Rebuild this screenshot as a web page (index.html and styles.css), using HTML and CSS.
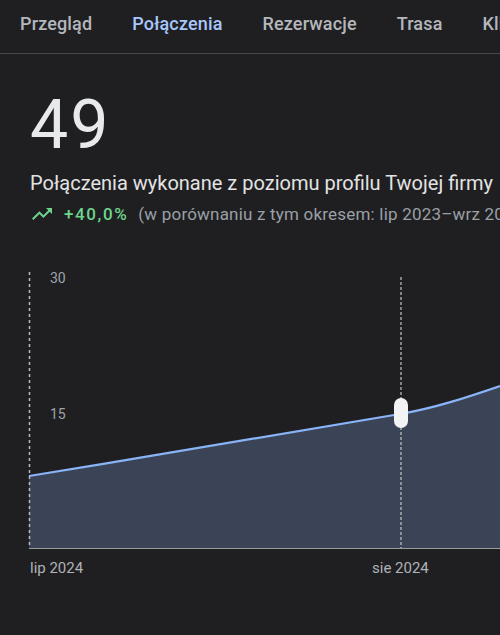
FILE: index.html
```html
<!DOCTYPE html>
<html lang="pl">
<head>
<meta charset="utf-8">
<link rel="stylesheet" href="styles.css">
</head>
<body>
<nav class="tabs">
  <span class="tab">Przegląd</span>
  <span class="tab active">Połączenia</span>
  <span class="tab">Rezerwacje</span>
  <span class="tab">Trasa</span>
  <span class="tab">Kliknięcia</span>
</nav>
<main class="summary">
  <div class="big">49</div>
  <div class="title">Połączenia wykonane z poziomu profilu Twojej firmy</div>
  <div class="trend">
    <svg class="trend-icon" viewBox="0 0 24 24" width="24" height="24"><path d="M16 6l2.29 2.29-4.88 4.88-4-4L2 16.59 3.41 18l6-6 4 4 6.3-6.29L22 12V6z"/></svg>
    <span class="pct">+40,0%</span>
    <span class="compare">(w porównaniu z tym okresem: lip 2023–wrz 2024)</span>
  </div>
</main>
<svg class="chart" width="500" height="330" viewBox="0 0 500 330">
  <path class="area" d="M29 216 C 160 195, 300 171, 400 154 C 435 148, 468 137, 500 126 L500 288 L29 288 Z"/>
  <path class="line" d="M29 216 C 160 195, 300 171, 400 154 C 435 148, 468 137, 500 126"/>
  <line class="axis-dash" x1="29.5" y1="12" x2="29.5" y2="288"/>
  <line class="base" x1="29" y1="288.5" x2="500" y2="288.5"/>
  <line class="hover" x1="401" y1="17" x2="401" y2="288"/>
  <rect class="handle" x="394" y="138" width="14" height="30" rx="7"/>
  <text class="ylab" x="50" y="23">30</text>
  <text class="ylab" x="50" y="159">15</text>
  <text class="xlab" x="30" y="313">lip 2024</text>
  <text class="xlab" x="372" y="313">sie 2024</text>
</svg>
</body>
</html>
```
FILE: styles.css
```css
html, body {
  margin: 0;
  padding: 0;
  background: #1f1f22;
  width: 500px;
  height: 635px;
  overflow: hidden;
  font-family: Roboto, "Liberation Sans", sans-serif;
}
.tabs {
  display: flex;
  gap: 40px;
  padding-left: 20px;
  height: 53px;
  border-bottom: 1px solid #47484c;
  white-space: nowrap;
  overflow: hidden;
}
.tab {
  position: relative;
  flex: none;
  font-size: 18px;
  font-weight: 500;
  line-height: 48px;
  letter-spacing: 0.15px;
  color: #b4b7bb;
}
.tab.active {
  color: #a8c7fa;
}
.tab.active::after {
  content: "";
  position: absolute;
  left: 3px;
  right: 2px;
  bottom: -5px;
  height: 3px;
  border-radius: 3px 3px 0 0;
  background: #a8c7fa;
}
.summary {
  padding-left: 30px;
  white-space: nowrap;
}
.big {
  margin-top: 38px;
  font-size: 68px;
  line-height: 66px;
  font-weight: 400;
  letter-spacing: 2px;
  color: #e8e9ea;
}
.title {
  margin-top: 12px;
  font-size: 20px;
  line-height: 26px;
  color: #e3e3e3;
}
.trend {
  margin-top: 6px;
  display: flex;
  align-items: center;
  height: 24px;
  font-size: 17px;
}
.trend-icon {
  fill: #6dd58c;
  margin-right: 10px;
  flex: none;
}
.pct {
  color: #6dd58c;
  font-weight: 500;
  letter-spacing: 1.6px;
  margin-right: 10px;
}
.compare {
  color: #9aa0a6;
  letter-spacing: 0.2px;
}
.chart {
  display: block;
  margin-top: 34px;
}
.area { fill: #3a4456; }
.line { fill: none; stroke: #8ab4f8; stroke-width: 2.2; }
.axis-dash { stroke: #b8bbbf; stroke-width: 1.5; stroke-dasharray: 3 3; }
.base { stroke: #9a9ca0; stroke-width: 1.2; }
.hover { stroke: #c4c7c5; stroke-width: 1.2; stroke-dasharray: 3 2; }
.handle { fill: #f1f3f4; }
.ylab { font-family: Roboto, "Liberation Sans", sans-serif; font-size: 14px; fill: #a0a3a8; }
.xlab { font-family: Roboto, "Liberation Sans", sans-serif; font-size: 15px; fill: #b0b3b8; }
```
